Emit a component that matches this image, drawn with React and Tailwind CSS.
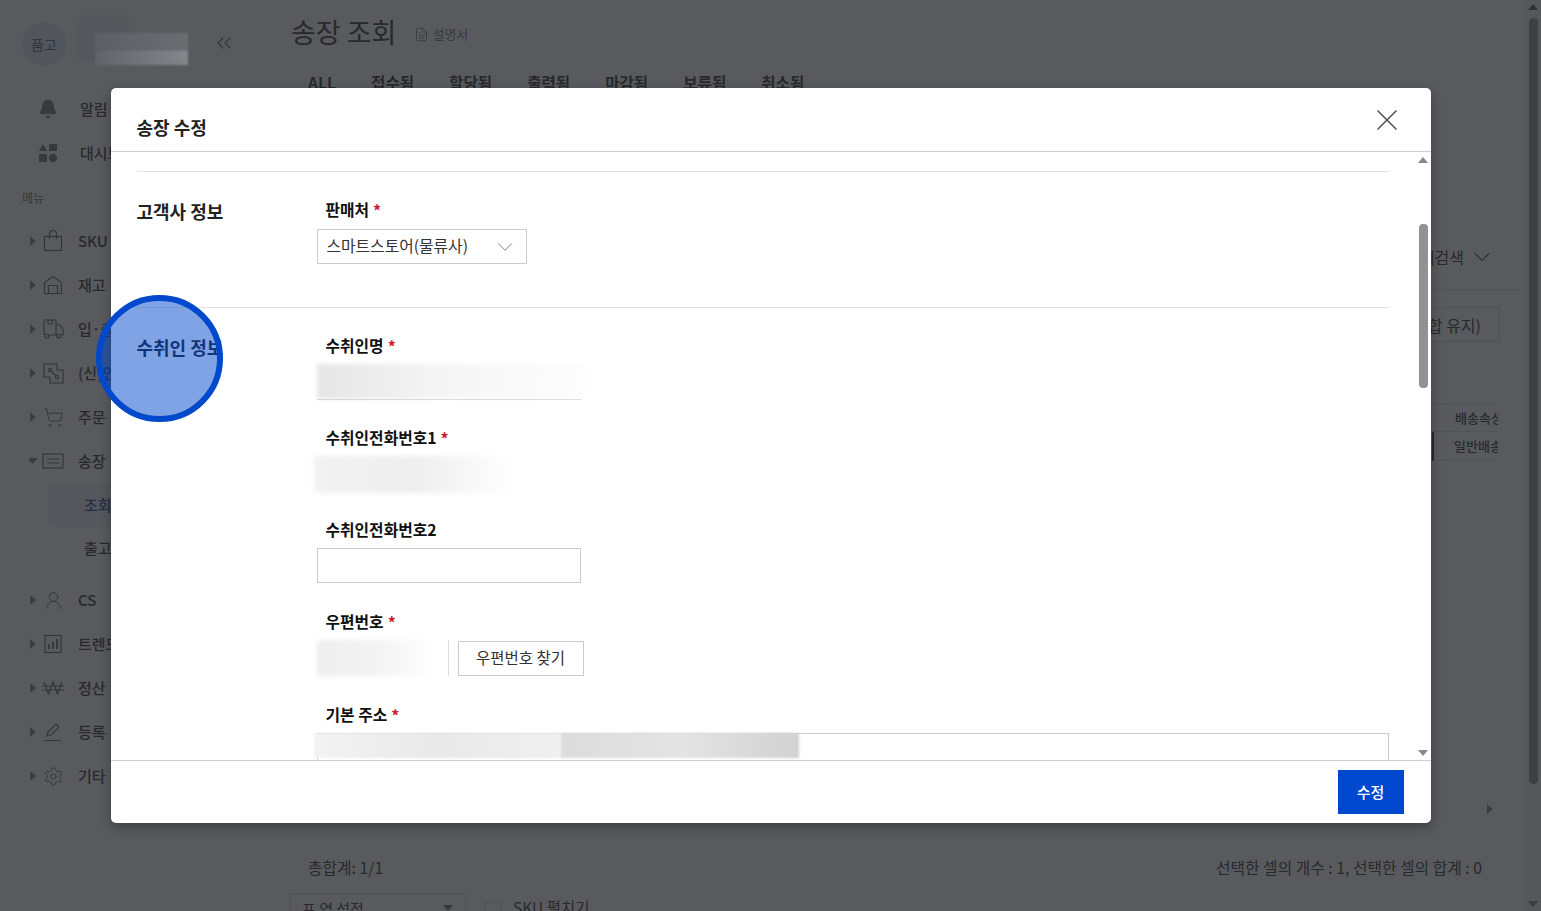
import React from "react";
import { Bell, ChevronDown, ChevronsLeft, FileText, Settings, ShoppingCart, UserRound, X } from "lucide-react";

const Tri = ({ down }) => (
  <svg width="8" height="10" viewBox="0 0 8 10" className="shrink-0">
    {down ? <path d="M-2 2h11L3.500 8z" fill="#888" /> : <path d="M1 0l6 5-6 5z" fill="#888" />}
  </svg>
);

const Bag = () => (
  <svg width="20" height="22" viewBox="0 0 20 22" fill="none" stroke="#666" strokeWidth="1.2">
    <rect x="1.500" y="6.500" width="17" height="14" />
    <path d="M6.500 9V4a3.500 3.500 0 0 1 7 0v5" />
  </svg>
);
const House = () => (
  <svg width="20" height="20" viewBox="0 0 20 20" fill="none" stroke="#666" strokeWidth="1.2">
    <path d="M1.500 18.500V7.500L10 1.500l8.500 6v11z" />
    <path d="M5.500 18.500v-8h9v8" />
  </svg>
);
const TruckBox = () => (
  <svg width="22" height="22" viewBox="0 0 22 22" fill="none" stroke="#666" strokeWidth="1.2">
    <path d="M2 17V2h12v15H7M14 7h4l3 4v6h-2M14 17h1" />
    <circle cx="5" cy="18" r="2" />
    <circle cx="17" cy="18" r="2" />
    <path d="M6 2v4h4V2" />
  </svg>
);
const Link2Box = () => (
  <svg width="22" height="22" viewBox="0 0 22 22" fill="none" stroke="#666" strokeWidth="1.2">
    <path d="M8 15H2V2h13v6" />
    <path d="M15 8h6v13H8v-6" />
    <circle cx="8" cy="8" r="1.600" />
    <circle cx="15" cy="15" r="1.600" />
    <path d="M9 9l5 5" />
  </svg>
);
const Invoice = () => (
  <svg width="22" height="16" viewBox="0 0 22 16" fill="none" stroke="#666" strokeWidth="1.2">
    <rect x="1" y="1" width="20" height="14" />
    <path d="M5 6h12M5 10h12" />
  </svg>
);
const Chart = () => (
  <svg width="20" height="20" viewBox="0 0 20 20" fill="none" stroke="#666" strokeWidth="1.2">
    <rect x="2" y="1.500" width="16" height="17" />
    <path d="M6 15v-5M10 15V8M14 15V5" strokeWidth="1.800" />
  </svg>
);
const Won = () => (
  <svg width="22" height="16" viewBox="0 0 22 16" fill="none" stroke="#666" strokeWidth="1.2">
    <path d="M2 2l4.500 12L11 2l4.500 12L20 2M0 6h22M0 10h22" />
  </svg>
);
const Pen = () => (
  <svg width="20" height="20" viewBox="0 0 20 20" fill="none" stroke="#666" strokeWidth="1.2">
    <path d="M4 14l1-4 8-8 3 3-8 8zM1 18.500h17" />
  </svg>
);
const Dash = () => (
  <svg width="20" height="20" viewBox="0 0 20 20" fill="#777">
    <path d="M5 1l4 7H1z" />
    <rect x="11" y="1" width="8" height="7" />
    <rect x="1" y="11" width="8" height="8" rx="1" />
    <circle cx="15" cy="15" r="4.200" />
  </svg>
);

const items = [
  [<Bag />, "SKU"],
  [<House />, "재고"],
  [<TruckBox />, "입·출고"],
  [<Link2Box />, "(신)연동"],
  [<ShoppingCart size={21} strokeWidth={1.1} color="#666" />, "주문"],
];
const items2 = [
  [<UserRound size={21} strokeWidth={1.1} color="#666" />, "CS"],
  [<Chart />, "트렌드"],
  [<Won />, "정산"],
  [<Pen />, "등록"],
  [<Settings size={21} strokeWidth={1.1} color="#666" />, "기타"],
];

function NavRow({ icon, label, down }) {
  return (
    <div className="h-[44px] flex items-center pl-[29px] text-[15px] font-medium text-[#333] whitespace-nowrap">
      <Tri down={down} />
      <span className="w-[22px] ml-[5px] flex justify-center">{icon}</span>
      <span className="ml-[14px]">{label}</span>
    </div>
  );
}

function Label({ children, req }) {
  return (
    <div className="h-[24px] pl-[9px] flex items-center gap-[4px] text-[15.800px] leading-[22px] font-bold text-[#111]">
      <span>{children}</span>
      {req && <span className="text-[#c8202f] text-[16px]">*</span>}
    </div>
  );
}

const Field = ({ label, req, children }) => (
  <div className="h-[92px]">
    <Label req={req}>{label}</Label>
    <div className="mt-[6px]">{children}</div>
  </div>
);

function Background() {
  return (
    <div className="flex h-[911px] overflow-hidden bg-white">
      <aside className="w-[290px] shrink-0">
        <div className="h-[87px] pt-[22px] pl-[22px] flex">
          <div className="w-[44px] h-[44px] rounded-full bg-[#e4ebf0] flex items-center justify-center text-[14px] text-[#666]">품고</div>
          <ChevronsLeft size={24} strokeWidth={1.1} color="#666" className="ml-[146px] mt-[9px]" />
        </div>
        <div className="h-[44px] flex items-center pl-[38px] text-[15px] font-medium text-[#333]">
          <Bell size={20} fill="#777" color="#777" />
          <span className="ml-[22px]">알림</span>
        </div>
        <div className="h-[44px] flex items-center pl-[38px] text-[15px] font-medium text-[#333]">
          <Dash />
          <span className="ml-[22px]">대시보드</span>
        </div>
        <div className="h-[23px] mt-[11px] pl-[22px] text-[12px] leading-[23px] text-[#888] font-medium">메뉴</div>
        <div className="h-[10px]" />
        {items.map(([i, l]) => <NavRow key={l} icon={i} label={l} />)}
        <NavRow icon={<Invoice />} label="송장" down />
        <div className="ml-[48px] h-[44px] w-[90px] rounded-[6px] bg-[#f0f3f7] flex items-center pl-[36px] text-[15px] font-medium text-[#2b3f8f]">조회</div>
        <div className="ml-[48px] h-[43px] flex items-center pl-[36px] text-[15px] font-medium text-[#333]">출고</div>
        <div className="h-[8px]" />
        {items2.map(([i, l]) => <NavRow key={l} icon={i} label={l} />)}
      </aside>
      <main className="flex-1 min-w-0 flex flex-col">
        <div className="h-[64px] flex items-center shrink-0">
          <span className="ml-px text-[27px] text-[#333]">송장 조회</span>
          <FileText size={15} strokeWidth={1.4} color="#777" className="ml-[18px] mt-[4px]" />
          <span className="ml-[3px] mt-[4px] text-[13px] text-[#777]">설명서</span>
        </div>
        <div className="mt-[7px] pl-[18px] flex gap-[35px] text-[15.600px] leading-[23px] font-bold text-[#333] shrink-0">
          {["ALL", "접수됨", "할당됨", "출력됨", "마감됨", "보류됨", "취소됨"].map((t) => <span key={t}>{t}</span>)}
        </div>
        <div className="h-[196px] border-b border-[#e5e5e5] flex items-end justify-end pr-[29px] pb-[20px] text-[16px] leading-[24px] text-[#333] shrink-0">
          <span>상세검색</span>
          <ChevronDown size={28} strokeWidth={0.9} className="ml-[4px] -mb-[2px]" />
        </div>
        <div className="mt-[17px] flex justify-end pr-[25px] shrink-0">
          <div className="h-[35px] px-[18px] border border-[#d9d9d9] flex items-center text-[16px] text-[#333]">조합 유지)</div>
        </div>
        <div className="mt-[61px] pr-[27px] flex justify-end shrink-0">
          <div className="w-[66px] text-[13px] text-[#333] font-medium overflow-hidden whitespace-nowrap">
            <div className="h-[29px] flex items-center pl-[23px] border-y border-[#e0e0e0]">배송속성</div>
            <div className="h-[29px] flex items-center pl-[20px] border-l-2 border-l-[#333] border-b border-b-[#e0e0e0]">일반배송</div>
          </div>
        </div>
        <div className="h-[353px] pr-[31px] flex items-end justify-end shrink-0">
          <Tri />
        </div>
        <div className="h-[50px] mt-[29px] pl-[18px] pr-[43px] flex items-center justify-between text-[15.800px] text-[#333] shrink-0">
          <span>총합계: 1/1</span>
          <span>선택한 셀의 개수 : 1, 선택한 셀의 합계 : 0</span>
        </div>
        <div className="flex items-start shrink-0">
          <div className="w-[176px] h-[36px] border border-[#ddd] flex items-start justify-between pl-[11px] pr-[12px] pt-[3px] text-[15px] leading-[24px] text-[#333]">
            <span>표 열 설정</span>
            <svg width="10" height="6" className="mt-[8px]"><path d="M0 0h10L5 6z" fill="#777" /></svg>
          </div>
          <div className="ml-[18px] mt-[9px] w-[17px] h-[17px] border border-[#ddd]" />
          <span className="ml-[12px] mt-[2px] text-[15.500px] leading-[24px] text-[#333]">SKU 펼치기</span>
        </div>
      </main>
      <div className="w-[16px] shrink-0 bg-[#f1f1f1]" />
    </div>
  );
}

function Modal() {
  return (
    <div className="mt-[88px] mx-auto w-[1320px] h-[735px] bg-white rounded-[5px] shadow-[0_4px_12px_rgba(0,0,0,0.3)] flex flex-col overflow-hidden relative">
      <header className="h-[64px] shrink-0 border-b border-[#d0d0d0] flex items-start justify-between pl-[26px] pr-[30px]">
        <h2 className="mt-[27px] text-[18px] leading-[24px] font-semibold text-[#222]">송장 수정</h2>
        <X size={36} strokeWidth={1.1} color="#555" className="mt-[14px] -mr-[4px]" />
      </header>
      <div className="flex-1 min-h-0 flex">
        <div className="flex-1 min-w-0 overflow-hidden pl-[26px] pr-[30px] pt-[19px]">
          <section className="flex border-t border-[#e2e2e2] pt-[26px] pb-[43px]">
            <h3 className="w-[180px] shrink-0 text-[18px] leading-[26px] font-semibold text-[#222]">고객사 정보</h3>
            <div>
              <Label req>판매처</Label>
              <div className="mt-[7px] w-[210px] h-[35px] border border-[#ccc] flex items-center justify-between pl-[9px] pr-[8px] text-[15.800px] text-[#333]">
                <span className="pb-[2px]">스마트스토어(물류사)</span>
                <ChevronDown size={26} strokeWidth={0.8} color="#666" />
              </div>
            </div>
          </section>
          <section className="flex border-t border-[#e2e2e2] pt-[26px]">
            <h3 className="w-[180px] shrink-0 text-[18px] leading-[26px] font-semibold text-[#222]">수취인 정보</h3>
            <div className="flex-1 min-w-0">
              <Field label="수취인명" req>
                <div className="w-[264px] h-[36px] border-b border-[#ccc]">
                  <div className="h-full w-[268px] bg-gradient-to-r from-[#e6e6e6] via-[#f6f6f6] to-[#fdfdfd] blur-[2px]" />
                </div>
              </Field>
              <Field label="수취인전화번호1" req>
                <div className="-ml-[3px] w-[200px] h-[37px] bg-gradient-to-r from-[#f2f2f2] via-[#eeeeee] to-white blur-[2px]" />
              </Field>
              <Field label="수취인전화번호2">
                <div className="w-[264px] h-[35px] mt-[3px] border border-[#ccc]" />
              </Field>
              <Field label="우편번호" req>
                <div className="flex items-center h-[36px] mt-[1px]">
                  <div className="w-[132px] h-[36px] border-r border-[#ddd]">
                    <div className="h-full w-[120px] bg-gradient-to-r from-[#eeeeee] via-[#f3f3f3] to-white blur-[2px]" />
                  </div>
                  <div className="ml-[9px] w-[126px] h-[35px] border border-[#ccc] flex items-center justify-center text-[15.500px] text-[#333]">우편번호 찾기</div>
                </div>
              </Field>
              <div className="mt-[1px]">
                <Label req>기본 주소</Label>
                <div className="mt-[6px] h-[36px] border border-[#ccc]">
                  <div className="-ml-[4px] w-[485px] h-[25px] -mt-px flex blur-[1px]">
                    <div className="w-[247px] bg-gradient-to-r from-[#f3f3f3] via-[#e9e9e9] to-[#f0f0f0]" />
                    <div className="flex-1 bg-gradient-to-r from-[#dcdcdc] via-[#e4e4e4] to-[#d2d2d2]" />
                  </div>
                </div>
              </div>
            </div>
          </section>
        </div>
        <div className="w-[9px] mr-[3px] shrink-0 flex flex-col items-center pt-[5px] pb-[4px]">
          <svg width="10" height="6" className="shrink-0"><path d="M5 0l5 6H0z" fill="#888" /></svg>
          <div className="mt-[61px] w-[9px] h-[164px] rounded-[4px] bg-[#929292] shrink-0" />
          <div className="flex-1" />
          <svg width="10" height="6" className="shrink-0"><path d="M0 0h10L5 6z" fill="#888" /></svg>
        </div>
      </div>
      <footer className="h-[63px] shrink-0 border-t border-[#d0d0d0] flex justify-end pt-[9px] pr-[27px]">
        <button className="w-[66px] h-[44px] bg-[#0048d0] text-white text-[15px] font-medium">수정</button>
      </footer>
    </div>
  );
}

export default function App() {
  return (
    <div className="relative h-[911px] overflow-hidden" style={{ fontFamily: '"Noto Sans CJK KR", "Noto Sans", sans-serif' }}>
      <Background />
      <div className="absolute inset-0 bg-[#24262b]/[0.76]">
        <div className="absolute left-[75px] top-[18px] w-[55px] h-[42px] bg-[#56575c] blur-[2px]" />
        <div className="absolute left-[95px] top-[33px] w-[93px] h-[17px] bg-gradient-to-r from-[#5e5f64] to-[#6c6d72] blur-[1px]" />
        <div className="absolute left-[95px] top-[50px] w-[93px] h-[15px] bg-gradient-to-r from-[#62636a] to-[#85868a] blur-[1px]" />
        <div className="absolute right-[3px] top-[18px] w-[9px] h-[766px] rounded-[5px] bg-[#3d3f43]" />
        <div className="absolute right-[3px] top-[4px] w-0 h-0 border-x-[5px] border-x-transparent border-b-[6px] border-b-[#2f3135]" />
        <div className="absolute right-[3px] bottom-[4px] w-0 h-0 border-x-[5px] border-x-transparent border-t-[6px] border-t-[#3a3c40]" />
        <Modal />
      </div>
      <div className="absolute left-[96px] top-[295px] w-[127px] h-[127px] rounded-full border-[6px] border-[#0048cc] bg-[#0048cc]/50" />
    </div>
  );
}
